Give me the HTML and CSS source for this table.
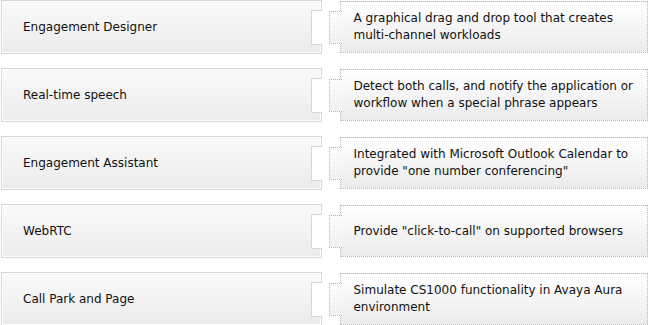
FILE: index.html
```html
<!DOCTYPE html>
<html lang="en">
<head>
    <meta charset="UTF-8">
    <title>Features</title>
    <link rel="stylesheet" href="styles.css">
</head>
<body>

    <div class="features">
        <div class="feature">
            <div class="feature-name">Engagement Designer</div>
            <div class="feature-desc">A graphical drag and drop tool that creates multi-channel workloads</div>
        </div>
        <div class="feature">
            <div class="feature-name">Real-time speech</div>
            <div class="feature-desc">Detect both calls, and notify the application or workflow when a special phrase appears</div>
        </div>
        <div class="feature">
            <div class="feature-name">Engagement Assistant</div>
            <div class="feature-desc">Integrated with Microsoft Outlook Calendar to provide "one number conferencing"</div>
        </div>
        <div class="feature">
            <div class="feature-name">WebRTC</div>
            <div class="feature-desc">Provide "click-to-call" on supported browsers</div>
        </div>
        <div class="feature">
            <div class="feature-name">Call Park and Page</div>
            <div class="feature-desc">Simulate CS1000 functionality in Avaya Aura environment</div>
        </div>
    </div>

</body>
</html>
```

FILE: styles.css
```css
body {
    margin: 0;
    background: #ffffff;
    font-family: "DejaVu Sans", Verdana, sans-serif;
    font-size: 12px;
    color: #111111;
}
.features {
    display: flex;
    flex-direction: column;
    gap: 15px;
    padding: 0 2px 0 1px;
}
.feature {
    display: flex;
    height: 53px;
}
.feature-name {
    position: relative;
    box-sizing: border-box;
    width: 322px;
    height: 54px;
    padding-left: 21px;
    display: flex;
    align-items: center;
    border: 1px solid #d6d6d6;
    box-shadow: inset 0 0 0 1px #ffffff;
    background: linear-gradient(#fafafa, #ebebeb);
}
/* notch cut into the right edge */
.feature-name::after {
    content: "";
    position: absolute;
    right: -1px;
    top: 9px;
    width: 11px;
    height: 35px;
    box-sizing: border-box;
    background: #ffffff;
    border: 1px solid #d6d6d6;
    border-right: none;
}
.feature-desc {
    position: relative;
    box-sizing: border-box;
    width: 308px;
    height: 52px;
    margin: 1px 0 0 18px;
    padding: 0 10px 0 12px;
    display: flex;
    align-items: center;
    line-height: 17px;
    border: 1px dotted #b8b8b8;
    background: linear-gradient(#ffffff, #ebebeb);
}
/* tab sticking out on the left, covering the box edge */
.feature-desc::before {
    content: "";
    position: absolute;
    left: -12px;
    top: 9px;
    width: 13px;
    height: 33px;
    box-sizing: border-box;
    border: 1px dotted #b8b8b8;
    border-right: none;
    background: linear-gradient(#fcfcfc, #f1f1f1);
}
```
